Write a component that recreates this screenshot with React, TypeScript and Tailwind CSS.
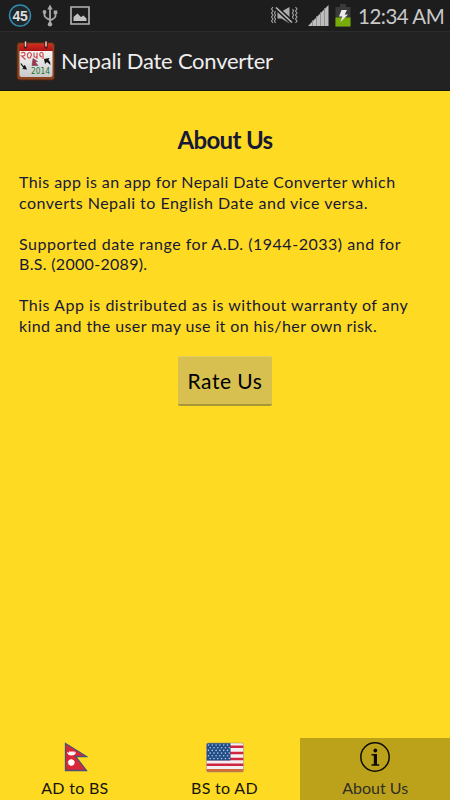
import { clsx } from 'clsx';
import type { ReactNode } from 'react';

const paragraphs = [
	[
		{ text: 'This app is an app for Nepali Date Converter which', tracking: 'tracking-[0.41px]' },
		{ text: 'converts Nepali to English Date and vice versa.', tracking: 'tracking-[0.48px]' },
	],
	[
		{ text: 'Supported date range for A.D. (1944-2033) and for', tracking: 'tracking-[0.52px]' },
		{ text: 'B.S. (2000-2089).', tracking: 'tracking-[0.31px]' },
	],
	[
		{ text: 'This App is distributed as is without warranty of any', tracking: 'tracking-[0.51px]' },
		{ text: 'kind and the user may use it on his/her own risk.', tracking: 'tracking-[0.39px]' },
	],
];

function StatusBar() {
	return (
		<div className="flex h-[31px] shrink-0 items-center bg-[#1d1d1d] pl-2 pr-[6px] text-[#c9c9c9]">
			<svg className="h-6 w-6" viewBox="0 0 24 24">
				<circle cx="12" cy="11.5" r="10.5" fill="#20272b" stroke="#3289ad" strokeWidth="1.5" />
				<text x="12" y="16.500" textAnchor="middle" fill="#dedede" fontSize="14" fontWeight="700" fontFamily="Liberation Sans, sans-serif" letterSpacing="-0.3">45</text>
			</svg>
			<svg className="ml-[10px] h-6 w-4" viewBox="0 0 16 24" fill="none" stroke="#a9a9a9" strokeWidth="1.8">
				<path d="M8 5v15M2.500 8v3.5q0 2 5.5 4.5M13.500 9v3q0 2-5.5 4.5" />
				<path d="M8 .5l2.7 5H5.3z" fill="#a9a9a9" stroke="none" />
				<circle cx="2.500" cy="8" r="1.900" fill="#a9a9a9" stroke="none" />
				<path d="M11.7 6.5h3.6v3.6h-3.6z" fill="#a9a9a9" stroke="none" />
				<circle cx="8" cy="20.3" r="2.2" fill="#a9a9a9" stroke="none" />
			</svg>
			<svg className="ml-[12px] h-[19px] w-[21px]" viewBox="0 0 21 19">
				<path d="M1 1h18v17H1z" fill="none" stroke="#b5b5b5" strokeWidth="1.600" />
				<path d="M3.5 15v-4l4-3.500 3.500 3.500 2.500-1.500 3 3V15z" fill="#c2c2c2" />
			</svg>

			<svg className="ml-auto h-[19px] w-[28px]" viewBox="0 0 28 19">
				<path d="M7.500 5.500h4l8-4.500v16.500l-8-5h-4z" fill="#ababab" />
				<path d="M5.5 1L22 16.5" stroke="#1d1d1d" strokeWidth="4.500" />
				<path d="M6 1.5L22 16.5" stroke="#bababa" strokeWidth="1.7" />
				<path d="M3 1L1.500 3 3 5 1.500 7 3 9l-1.500 2L3 13l-1.500 2L3 17M5.500 5L4.500 7l1 2-1 2 1 2-1 2 1 2M25.500 1L27 3l-1.500 2L27 7l-1.500 2 1.500 2-1.500 2 1.500 2-1.500 2M22.500 3l1 2-1 2 1 2-1 2 1 2" fill="none" stroke="#a5a5a5" strokeWidth="1.1" />
			</svg>
			<svg className="ml-[10px] h-[23px] w-[21px]" viewBox="0 0 21 23">
				<path d="M0 22L20.5 1v21z" fill="#bdbdbd" />
				<path d="M4.500 16v6M8.500 12v10M12.500 8v14M16.500 4v18" stroke="#858585" strokeWidth=".8" />
			</svg>
			<svg className="ml-[6px] h-[23px] w-4" viewBox="0 0 16 23">
				<path d="M5 0h6v3h4.5v19.5H.5V3H5z" fill="#3a3a3a" />
				<path d="M.5 13.500h15v9H.5z" fill="#78ac08" />
				<path d="M6.500 6h5.500l-2.300 4.500H13L5.500 18l1.800-5.500H4z" fill="#ececec" />
			</svg>
			<span className="ml-[7px] w-[86px] whitespace-nowrap text-[20.500px] leading-[30px] tracking-[-0.5px]">12:34 AM</span>
		</div>
	);
}

function CalendarIcon() {
	return (
		<svg className="h-[40px] w-[40px]" viewBox="0 0 40 40">
			<defs>
				<linearGradient id="paper" x1="0" y1="0" x2="0" y2="1">
					<stop offset="0" stopColor="#f8f8f8" />
					<stop offset="1" stopColor="#c9c9c9" />
				</linearGradient>
				<linearGradient id="header" x1="0" y1="0" x2="0" y2="1">
					<stop offset="0" stopColor="#d52a22" />
					<stop offset="1" stopColor="#a91313" />
				</linearGradient>
			</defs>
			<rect x="1" y="1.5" width="37.500" height="37.500" rx="3" fill="#8a4420" stroke="#51240e" />
			<rect x="3.500" y="9" width="33" height="27" rx="2" fill="url(#paper)" />
			<path d="M3.500 10V4.500Q3.500 3 5 3h30q1.500 0 1.500 1.500V10z" fill="url(#header)" />
			<path d="M9.5 1.500V6M30 1.500V6" stroke="#55180f" strokeWidth="3.500" strokeLinecap="round" />
			<path d="M9.5 1v4M30 1v4" stroke="#d8d8d8" strokeWidth="1.500" strokeLinecap="round" />
			<path d="M5 12q3.500-1.500 4 .8t-3.500 2.200l4 3.500M14 11.500q-3 .5-2.500 3.500t3 1.500q2-4-.5-5M18 11.500v4q1 1.500 3 0v-4V18M26 16q-3-1-2-3.500t3 0V18" fill="none" stroke="#cf4b4f" strokeWidth="1.2" />
			<path d="M17 17.500l4.500 3-2.500.5 3 3.500h-6z" fill="#b42d39" stroke="#4c4c70" strokeWidth=".6" />
			<path d="M5 22l2.500 3 1.500-1 2 4.500-5-.5 1.500-1-3-4zM28 18l5.500-1-1 2q2.500 2 2 5l-3.500-3-2 2z" fill="#111" />
			<text x="15" y="33.300" fill="#24712c" fontSize="8.500" fontFamily="DejaVu Sans, sans-serif" textLength="19" lengthAdjust="spacingAndGlyphs">2014</text>
		</svg>
	);
}

function NepalFlag() {
	return (
		<svg className="h-[30px] w-[26px]" viewBox="0 0 26 30">
			<path d="M3.500 1.5L24.500 14.500H13.500L24.500 28.500h-21z" fill="#d92738" stroke="#475078" strokeWidth="1.3" />
			<path d="M5 10l2 .7.5-1.800 1.500 1 1-1 1 1 1.300-1 .4 1.800 1.500-.7q-1 3.500-4.700 3.500T5 10z" fill="#fff" />
			<circle cx="9.300" cy="20.5" r="3" fill="#fff" stroke="#fff" strokeWidth="1" strokeDasharray="1 .7" />
		</svg>
	);
}

function UsaFlag() {
	const rows = [0, 1, 2, 3, 4, 5];
	return (
		<svg className="h-[31px] w-[38px]" viewBox="0 0 38 31">
			<defs>
				<clipPath id="flag"><rect x=".5" y="1" width="37" height="29" rx="1.5" /></clipPath>
			</defs>
			<g clipPath="url(#flag)">
				<path d="M0 0h38v31H0z" fill="#f4eff0" />
				<path d="M0 4.800h38M0 11h38M0 17h38M0 22.800h38" stroke="#cf2540" strokeWidth="2.600" />
				<path d="M0 28.500h38" stroke="#cf6c36" strokeWidth="3" />
				<path d="M0 0h24.5v18.5H0z" fill="#204c88" />
				{rows.map((row) =>
					rows.map((col) => (
						<circle key={`${row}-${col}`} cx={2.5 + col * 3.8 + (row % 2) * 1.7} cy={3 + row * 2.7} r=".8" fill="#b9c9dc" />
					)),
				)}
			</g>
			<rect x=".5" y="1" width="37" height="29" rx="1.5" fill="none" stroke="#a49b6f" strokeWidth=".6" />
		</svg>
	);
}

function InfoIcon() {
	return (
		<svg className="h-8 w-8" viewBox="0 0 32 32">
			<circle cx="16" cy="16" r="14.2" fill="none" stroke="#0b0b04" strokeWidth="1.5" />
			<circle cx="16.300" cy="9.5" r="1.900" fill="#0b0b04" />
			<path d="M12.500 13h5.500v10.300h2.200v1.500h-7.700v-1.500h2.300v-8.800h-2.300z" fill="#0b0b04" />
		</svg>
	);
}

function Tab({ icon, label, active }: { icon: ReactNode; label: string; active?: boolean }) {
	return (
		<button className={clsx('flex flex-1 flex-col items-center pt-[3px]', active && 'border-l border-[#ffda22] bg-[#bca21b]')}>
			<span className="flex h-8 items-center">{icon}</span>
			<span
				className={clsx(
					'mt-[4px] whitespace-nowrap text-[16px] leading-[22px]',
					active ? 'text-[#302e24]' : 'tracking-[0.3px] text-[#15150c]',
				)}
			>
				{label}
			</span>
		</button>
	);
}

export default function App() {
	return (
		<div className="flex h-[800px] w-[450px] flex-col overflow-hidden bg-[#ffda22] font-['Lato','Noto_Sans',sans-serif]">
			<StatusBar />
			<header className="flex h-[60px] shrink-0 items-center border-b border-[#17130d] border-t border-t-[#2c2c2c] bg-[#222] pl-4">
				<CalendarIcon />
				<h1 className="ml-[5px] whitespace-nowrap text-[22px] leading-[30px] tracking-[-0.24px] text-[#eee]">Nepali Date Converter</h1>
			</header>

			<main className="flex flex-1 flex-col items-center pt-[33px] text-[#171936]">
				<h2 className="whitespace-nowrap text-[24px] font-bold leading-8 tracking-[-0.65px]">About Us</h2>
				<div className="mt-[16px] flex w-full flex-col gap-[20.5px] pl-[19px] text-[16px] leading-[20.5px]">
					{paragraphs.map((lines, i) => (
						<p key={i}>
							{lines.map((line) => (
								<span key={line.text} className={clsx('block whitespace-nowrap', line.tracking)}>
									{line.text}
								</span>
							))}
						</p>
					))}
				</div>
				<button className="mt-[20px] h-[50px] w-[94px] whitespace-nowrap rounded-[2px] border-b-2 border-t border-b-[#a99636] border-t-[#dfcc62] bg-[#d7c04f] text-[21px] tracking-[0.5px] text-black">
					Rate Us
				</button>
			</main>

			<nav className="flex h-[62px] shrink-0">
				<Tab icon={<NepalFlag />} label="AD to BS" />
				<Tab icon={<UsaFlag />} label="BS to AD" />
				<Tab icon={<InfoIcon />} label="About Us" active />
			</nav>
		</div>
	);
}
